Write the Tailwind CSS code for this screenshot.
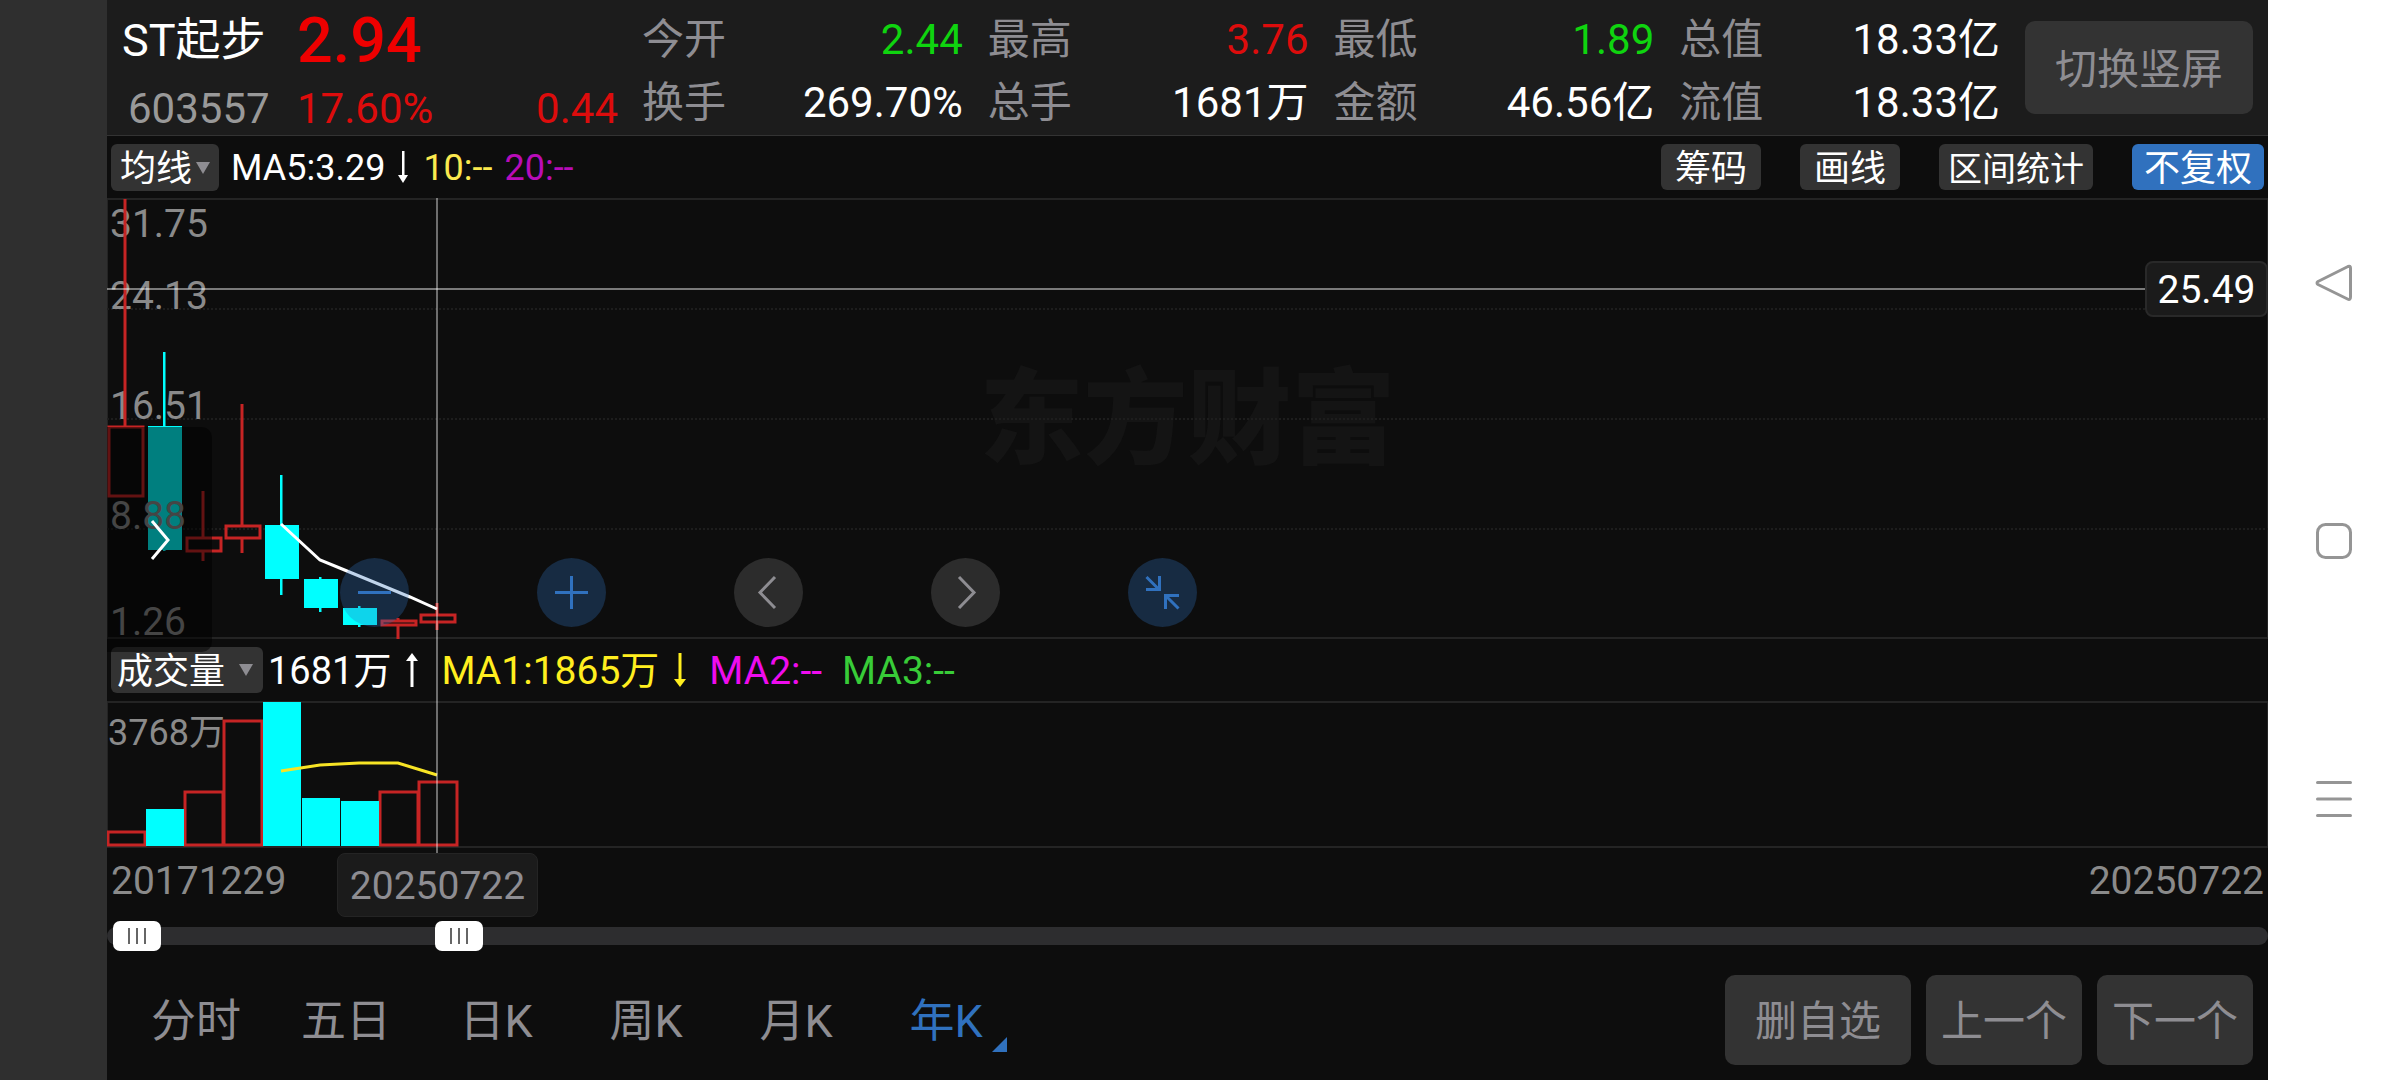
<!DOCTYPE html>
<html lang="zh-CN">

<head>
  <meta charset="UTF-8">
  <meta name="viewport" content="width=device-width, initial-scale=1.0">
  <title>ST起步 603557 - 年K</title>
  <script src="https://cdn.jsdelivr.net/npm/@tailwindcss/browser@4"></script>
</head>

<body class="flex min-h-screen overflow-hidden bg-[#2f2f2f] font-['Roboto','Noto_Sans_CJK_SC',sans-serif] text-white">
  <main class="ml-[107px] flex min-w-0 flex-1 flex-col bg-[#0d0d0d]">

    <!-- Quote header -->
    <header class="flex h-[136px] border-b border-[#333] bg-[#1c1c1c] pr-[15px] text-[42px] leading-[63px]">
      <div class="grid w-[535px] shrink-0 grid-cols-[175px_1fr_auto] grid-rows-[68px_68px] items-center pt-[6px] pr-[24px] pl-[15px]">
        <h1 class="text-[45px]">ST起步</h1>
        <strong class="col-span-2 text-[63px] font-medium text-[#ee0000]">2.94</strong>
        <span class="pl-[6px] text-[#999]">603557</span>
        <span class="text-[#dd0c0c]">17.60%</span>
        <span class="text-[#dd0c0c]">0.44</span>
      </div>
      <dl class="grid flex-1 grid-cols-4 grid-rows-[63px_63px] gap-x-[25px] pt-[8px]">
        <div class="flex justify-between"><dt class="text-[#8e8d92]">今开</dt><dd class="text-[#0fd40f]">2.44</dd></div>
        <div class="flex justify-between"><dt class="text-[#8e8d92]">最高</dt><dd class="text-[#dd0c0c]">3.76</dd></div>
        <div class="flex justify-between"><dt class="text-[#8e8d92]">最低</dt><dd class="text-[#0fd40f]">1.89</dd></div>
        <div class="flex justify-between"><dt class="text-[#8e8d92]">总值</dt><dd>18.33亿</dd></div>
        <div class="flex justify-between"><dt class="text-[#8e8d92]">换手</dt><dd>269.70%</dd></div>
        <div class="flex justify-between"><dt class="text-[#8e8d92]">总手</dt><dd>1681万</dd></div>
        <div class="flex justify-between"><dt class="text-[#8e8d92]">金额</dt><dd>46.56亿</dd></div>
        <div class="flex justify-between"><dt class="text-[#8e8d92]">流值</dt><dd>18.33亿</dd></div>
      </dl>
      <button class="mt-[21px] ml-[25px] h-[93px] w-[228px] rounded-[10px] bg-[#333] pt-1 text-[#8e8d92]">切换竖屏</button>
    </header>

    <!-- Moving averages and tools -->
    <div class="flex h-[62px] items-center pr-1 pl-1 text-[36px] leading-[46px]">
      <div class="relative">
        <select aria-label="主图指标" class="block h-[47px] w-[108px] appearance-none rounded-md bg-[#333] pt-[2px] pl-[9px]">
          <option>均线</option>
        </select>
        <svg class="pointer-events-none absolute top-[18px] right-2 h-[12px] w-[16px]" viewBox="0 0 16 12"><path d="M1 0H15L8 12Z" fill="#8e8d92" /></svg>
      </div>
      <span class="ml-[12px] pt-[2px]">MA5:3.29</span>
      <svg class="ml-[10px] h-[34px] w-[16px]" viewBox="0 0 16 34"><path d="M7 1H9.500V25H13L8 33L3 25H7Z" fill="#fff" /></svg>
      <span class="ml-[12px] pt-[2px] text-[#fbe94f]">10:--</span>
      <span class="ml-[12px] pt-[2px] text-[#b80cb8]">20:--</span>
      <div class="ml-auto flex gap-[39px]">
        <button class="h-[46px] w-[100px] rounded-md bg-[#333] pt-[2px]">筹码</button>
        <button class="h-[46px] w-[100px] rounded-md bg-[#333] pt-[2px]">画线</button>
        <button class="h-[46px] w-[154px] rounded-md bg-[#333] pt-[2px] text-[34px]">区间统计</button>
        <button class="h-[46px] w-[132px] rounded-md bg-[#3071be] pt-[2px]">不复权</button>
      </div>
    </div>

    <div class="relative">
      <!-- Candles -->
      <section class="relative h-[441px]" aria-label="年K线">
        <div class="absolute inset-0 flex items-center justify-center pt-1 text-[104px] leading-none font-black text-[#141414]">东方财富</div>
        <svg class="absolute inset-0 h-full w-full">
          <rect x="0" y="1" width="100%" height="439" fill="none" stroke="#242424" stroke-width="2" />
          <g stroke="#1d1d1d" stroke-width="2" stroke-dasharray="2 2">
            <line x1="0" y1="111" x2="100%" y2="111" />
            <line x1="0" y1="221" x2="100%" y2="221" />
            <line x1="0" y1="331" x2="100%" y2="331" />
          </g>
          <g fill="#8a8a8a" font-size="39">
            <text x="3" y="39">31.75</text>
            <text x="3" y="111">24.13</text>
            <text x="3" y="221">16.51</text>
          </g>
          <g fill="none" stroke="#c62424" stroke-width="3">
            <path d="M18 1V229M2 229H36V298H2Z" />
            <path d="M96 293V340M96 353V363M80 340H114V353H80Z" />
            <path d="M135 206V328M135 340V355M119 328H153V340H119Z" />
            <path d="M291 420V423M291 427V441M275 423H309V427H275Z" />
            <path d="M330 405V417M330 424V432M314 417H348V424H314Z" />
          </g>
          <g fill="#00ffff">
            <path d="M56 154H58.500V228H75V352H58.500V353H56V352H41V228H56Z" />
            <path d="M173 277H175.500V327H192V381H175.500V397H173V381H158V327H173Z" />
            <path d="M212 379H214.500V381H231V410H214.500V414H212V410H197V381H212Z" />
            <path d="M251 408H253.500V410H270V427H253.500V429H251V427H236V410H251Z" />
          </g>
          <polyline points="174,326 213,362 240,373 303,399 330,411" fill="none" stroke="#fff" stroke-width="3" />
          <g fill="#8a8a8a" font-size="39">
            <text x="3" y="331">8.88</text>
            <text x="3" y="437">1.26</text>
          </g>
        </svg>

        <!-- Chart controls -->
        <div class="absolute top-[360px] left-[233px] flex gap-[128px]">
          <button aria-label="缩小" class="size-[69px] rounded-full bg-[#3071be]/30">
            <svg viewBox="0 0 69 69" fill="none" stroke="#3071be" stroke-width="3"><path d="M18 34.5H51" /></svg>
          </button>
          <button aria-label="放大" class="size-[69px] rounded-full bg-[#3071be]/30">
            <svg viewBox="0 0 69 69" fill="none" stroke="#3071be" stroke-width="3"><path d="M18 34.5H51M34.5 18V51" /></svg>
          </button>
          <button aria-label="左移" class="size-[69px] rounded-full bg-[#2c2c2c]">
            <svg viewBox="0 0 69 69" fill="none" stroke="#8e8d92" stroke-width="3"><path d="M41 19L26 34.5L41 50" /></svg>
          </button>
          <button aria-label="右移" class="size-[69px] rounded-full bg-[#2c2c2c]">
            <svg viewBox="0 0 69 69" fill="none" stroke="#8e8d92" stroke-width="3"><path d="M28 19L43 34.5L28 50" /></svg>
          </button>
          <button aria-label="收起" class="size-[69px] rounded-full bg-[#3071be]/30">
            <svg viewBox="0 0 69 69" fill="none" stroke="#3071be" stroke-width="3"><path d="M18 31.5H31.5V18M18.5 19L31 31.5M37.5 51V37.5H51M50.5 50.5L38 38" /></svg>
          </button>
        </div>
      </section>

      <!-- Volume figures -->
      <div class="flex h-[62px] items-center pl-1 text-[38px] leading-[46px]">
        <div class="relative text-[36px]">
          <select aria-label="副图指标" class="block h-[46px] w-[152px] appearance-none rounded-md bg-[#333] pt-[2px] pl-[6px]">
            <option>成交量</option>
          </select>
          <svg class="pointer-events-none absolute top-[17px] right-[9px] h-[12px] w-[16px]" viewBox="0 0 16 12"><path d="M1 0H15L8 12Z" fill="#8e8d92" /></svg>
        </div>
        <span class="ml-[5px] pt-[2px]">1681万</span>
        <svg class="ml-[14px] h-[36px] w-[14px]" viewBox="0 0 14 36"><path d="M7 1L13 9H8.500V35H5.500V9H1Z" fill="#fff" /></svg>
        <span class="ml-[22px] pt-[2px] text-[39px] text-[#ffee1f]">MA1:1865万</span>
        <svg class="ml-[14px] h-[36px] w-[14px]" viewBox="0 0 14 36"><path d="M5.500 1H8.500V27H13L7 35L1 27H5.500Z" fill="#ffee1f" /></svg>
        <span class="ml-[22px] pt-[2px] text-[39px] text-[#ee0cee]">MA2:--</span>
        <span class="ml-[20px] pt-[2px] text-[39px] text-[#38cc38]">MA3:--</span>
      </div>

      <!-- Volume bars -->
      <section class="h-[147px]" aria-label="成交量">
        <svg class="block h-full w-full">
          <rect x="0" y="1" width="100%" height="145" fill="none" stroke="#242424" stroke-width="2" />
          <text x="1" y="44" font-size="36" fill="#8a8a8a">3768万</text>
          <g fill="none" stroke="#c62424" stroke-width="3">
            <path d="M1 131H38V144H1ZM78 91H116V144H78ZM117 20H155V144H117ZM273 91H311V144H273ZM312 81H350V144H312Z" />
          </g>
          <path d="M39 108H77V145H39ZM156 1H194V145H156ZM195 97H233V145H195ZM234 100H272V145H234Z" fill="#00ffff" />
          <polyline points="174,70 213,64 252,62 291,62 330,74" fill="none" stroke="#f7e425" stroke-width="3" />
        </svg>
      </section>

      <!-- Side panel handle -->
      <button aria-label="展开" class="absolute top-[229px] left-0 h-[225px] w-[105px] rounded-r-[10px] bg-black/50">
        <svg class="ml-[42px] h-[44px] w-[22px]" viewBox="0 0 22 44" fill="none" stroke="#fff" stroke-width="3"><path d="M3 3L19 22L3 41" /></svg>
      </button>

      <!-- Crosshair -->
      <div class="absolute top-[90px] left-0 h-[2px] w-full bg-white/45"></div>
      <div class="absolute top-0 left-[329px] h-[655px] w-[2px] bg-white/40"></div>
      <output class="absolute top-[63px] right-0 flex h-[56px] w-[123px] items-center justify-center rounded-lg border-2 border-[#292929] bg-[#1b1b1b] pt-[2px] text-[39px]">25.49</output>
      <output class="absolute top-[655px] left-[230px] flex h-[64px] w-[201px] items-center justify-center rounded-lg border border-[#242424] bg-[#1b1b1b] pt-[2px] text-[39px] text-[#8e8d92]">20250722</output>
    </div>

    <!-- Dates -->
    <div class="flex h-[73px] justify-between pt-[8px] pr-[4px] pl-[4px] text-[39px] leading-[50px] text-[#8a8a8a]">
      <span>20171229</span>
      <span>20250722</span>
    </div>

    <!-- Range -->
    <div class="relative flex h-[30px] items-center">
      <div class="h-[18px] w-full rounded-full bg-[#2d2d2f]"></div>
      <input type="range" aria-label="起始日期" min="0" max="100" step="any" value="0.28" class="pointer-events-none absolute inset-0 h-[30px] w-full appearance-none bg-transparent [&::-webkit-slider-thumb]:pointer-events-auto [&::-webkit-slider-thumb]:h-[30px] [&::-webkit-slider-thumb]:w-[48px] [&::-webkit-slider-thumb]:appearance-none [&::-webkit-slider-thumb]:rounded-[7px] [&::-webkit-slider-thumb]:bg-white [&::-webkit-slider-thumb]:bg-[linear-gradient(90deg,transparent_15px,#666_15px_17px,transparent_17px_23px,#666_23px_25px,transparent_25px_31px,#666_31px_33px,transparent_33px)] [&::-webkit-slider-thumb]:bg-[length:48px_16px] [&::-webkit-slider-thumb]:bg-center [&::-webkit-slider-thumb]:bg-no-repeat">
      <input type="range" aria-label="结束日期" min="0" max="100" step="any" value="15.5" class="pointer-events-none absolute inset-0 h-[30px] w-full appearance-none bg-transparent [&::-webkit-slider-thumb]:pointer-events-auto [&::-webkit-slider-thumb]:h-[30px] [&::-webkit-slider-thumb]:w-[48px] [&::-webkit-slider-thumb]:appearance-none [&::-webkit-slider-thumb]:rounded-[7px] [&::-webkit-slider-thumb]:bg-white [&::-webkit-slider-thumb]:bg-[linear-gradient(90deg,transparent_15px,#666_15px_17px,transparent_17px_23px,#666_23px_25px,transparent_25px_31px,#666_31px_33px,transparent_33px)] [&::-webkit-slider-thumb]:bg-[length:48px_16px] [&::-webkit-slider-thumb]:bg-center [&::-webkit-slider-thumb]:bg-no-repeat">
    </div>

    <!-- Periods and actions -->
    <footer class="flex flex-1 items-center justify-between pt-[9px] pr-[15px] pl-[14px] text-[#8e8d92]">
      <nav class="flex pt-1 text-[45px] leading-[60px]">
        <button class="w-[150px]">分时</button>
        <button class="w-[150px]">五日</button>
        <button class="w-[150px]">日K</button>
        <button class="w-[150px]">周K</button>
        <button class="w-[150px]">月K</button>
        <button class="relative w-[150px] text-[#3071be]">年K
          <svg class="absolute right-[14px] bottom-0 size-[15px]" viewBox="0 0 15 15"><path d="M15 0V15H0Z" fill="#3071be" /></svg>
        </button>
      </nav>
      <div class="flex gap-[15px] text-[42px]">
        <button class="h-[90px] w-[186px] rounded-[10px] bg-[#333] pt-[2px]">删自选</button>
        <button class="h-[90px] w-[156px] rounded-[10px] bg-[#333] pt-[2px]">上一个</button>
        <button class="h-[90px] w-[156px] rounded-[10px] bg-[#333] pt-[2px]">下一个</button>
      </div>
    </footer>
  </main>

  <!-- System navigation -->
  <aside class="flex w-[132px] shrink-0 flex-col items-center gap-[218px] bg-white pt-[263px]">
    <button aria-label="返回" class="size-[40px]">
      <svg viewBox="0 0 40 40" fill="none" stroke="#959595" stroke-width="3" stroke-linejoin="round"><path d="M34 3.5Q36.500 2.500 36.500 5V34Q36.500 37.500 33.500 36L4 21.500Q2 20 4 18.500Z" /></svg>
    </button>
    <button aria-label="主页" class="size-[40px]">
      <svg viewBox="0 0 40 40" fill="none" stroke="#959595" stroke-width="3"><rect x="3.500" y="3.500" width="33" height="33" rx="8" /></svg>
    </button>
    <button aria-label="菜单" class="size-[40px]">
      <svg viewBox="0 0 40 40" fill="none" stroke="#959595" stroke-width="3" stroke-linecap="round"><path d="M3.500 3.500H36.500M3.500 20H36.500M3.500 36.500H36.500" /></svg>
    </button>
  </aside>
</body>

</html>
